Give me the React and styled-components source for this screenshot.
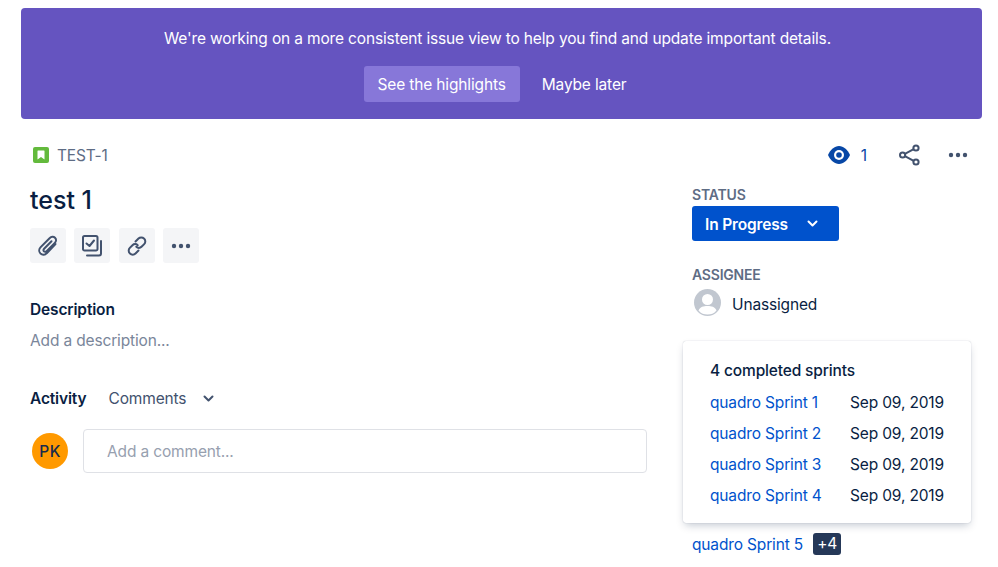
import React from "react";
import styled, { createGlobalStyle } from "styled-components";

const Global = createGlobalStyle`
  html, body { margin: 0; padding: 0; background: #fff; }
  body {
    width: 998px;
    height: 567px;
    overflow: hidden;
    font-family: Inter, "Liberation Sans", sans-serif;
    font-size: 15.5px;
    letter-spacing: -0.15px;
    color: #091e42;
  }
`;

const Page = styled.div`
  padding: 8px 16px 0 21px;
`;

const Banner = styled.div`
  height: 111px;
  box-sizing: border-box;
  padding-top: 20px;
  background: #6554c0;
  border-radius: 4px;
  color: #fff;
  text-align: center;
`;

const BannerText = styled.div`
  line-height: 21px;
  padding-right: 8px;
`;

const BannerActions = styled.div`
  display: flex;
  justify-content: center;
  gap: 4px;
  margin-top: 17px;
  padding-left: 5px;
`;

const BannerButton = styled.div`
  height: 36px;
  line-height: 37px;
  padding: 0 ${(p) => (p.$primary ? 14 : 18)}px;
  border-radius: 3px;
  background: ${(p) => (p.$primary ? "#8777d9" : "transparent")};
`;

const Columns = styled.div`
  display: grid;
  grid-template-columns: 662px 1fr;
  padding-left: 9px;
`;

const Main = styled.div`
  padding-top: 25px;
`;

const IssueKey = styled.div`
  display: flex;
  align-items: center;
  gap: 8px;
  height: 22px;
  padding-left: 3px;
  color: #5e6c84;
`;

const Title = styled.h1`
  margin: 19px 0 0;
  font-size: 25px;
  line-height: 30px;
  font-weight: 500;
  letter-spacing: 0;
  color: #091e42;
`;

const ToolRow = styled.div`
  display: flex;
  gap: 8.3px;
  margin-top: 13px;
`;

const ToolButton = styled.div`
  width: 36px;
  height: 35px;
  display: flex;
  align-items: center;
  justify-content: center;
  background: #f4f5f7;
  border-radius: 3px;
  color: #42526e;
`;

const SectionTitle = styled.div`
  font-weight: 600;
  line-height: 20px;
  color: #091e42;
`;

const Description = styled.section`
  margin-top: 37px;
`;

const Placeholder = styled.div`
  margin-top: 11px;
  line-height: 20px;
  color: #7a869a;
`;

const ActivityRow = styled.div`
  display: flex;
  align-items: center;
  margin-top: 38px;
  height: 20px;
`;

const ActivityFilter = styled.div`
  display: flex;
  align-items: center;
  gap: 17px;
  margin-left: 22px;
  padding-bottom: 2px;
  color: #42526e;
`;

const CommentRow = styled.div`
  display: flex;
  align-items: center;
  gap: 15px;
  margin-top: 20px;
  padding-left: 2px;
`;

const Avatar = styled.div`
  width: 36px;
  height: 36px;
  flex: none;
  display: flex;
  align-items: center;
  justify-content: center;
  border-radius: 50%;
  background: #ff9900;
  font-weight: 500;
  letter-spacing: 0.5px;
  color: #172b4d;
`;

const CommentBox = styled.div`
  width: 564px;
  height: 44px;
  box-sizing: border-box;
  padding-left: 23px;
  line-height: 43px;
  border: 1px solid #dfe1e6;
  border-radius: 4px;
  color: #97a0af;
`;

const Side = styled.div`
  position: relative;
  padding-top: 24px;
`;

const SideActions = styled.div`
  display: flex;
  align-items: center;
  justify-content: flex-end;
  width: 276px;
  height: 24px;
  color: #42526e;
`;

const WatchCount = styled.span`
  margin: 0 32px 0 11px;
  color: #0747a6;
`;

const ShareWrap = styled.span`
  display: flex;
  margin-right: 28px;
`;

const FieldLabel = styled.div`
  font-size: 14px;
  line-height: 16px;
  font-weight: 600;
  letter-spacing: -0.2px;
  color: #5e6c84;
  margin-top: ${(p) => p.$top}px;
`;

const StatusButton = styled.div`
  display: flex;
  align-items: center;
  justify-content: space-between;
  box-sizing: border-box;
  width: 147px;
  height: 35px;
  margin-top: 3px;
  padding: 0 21px 0 13px;
  background: #0052cc;
  border-radius: 3px;
  color: #fff;
  font-weight: 600;
`;

const StatusLabel = styled.span`
  padding-top: 2px;
`;

const Assignee = styled.div`
  display: flex;
  align-items: center;
  gap: 11px;
  margin-top: 5px;
  padding-left: 2px;
  height: 28px;
`;

const AssigneeName = styled.span`
  padding-top: 4px;
`;

const SprintField = styled.div`
  display: flex;
  align-items: center;
  gap: 10px;
  margin-top: 217px;
`;

const SprintLink = styled.a`
  color: #0052cc;
  text-decoration: none;
`;

const MoreBadge = styled.span`
  width: 28px;
  height: 22px;
  line-height: 22px;
  text-align: center;
  border-radius: 3px;
  background: #253858;
  color: #fff;
`;

const Popup = styled.div`
  position: absolute;
  left: -9px;
  top: 222px;
  box-sizing: border-box;
  width: 288px;
  height: 182px;
  padding: 20px 27px 0;
  background: #fff;
  border-radius: 3px;
  box-shadow: 0 4px 8px -2px rgba(9, 30, 66, 0.25), 0 0 1px rgba(9, 30, 66, 0.31);
`;

const PopupTitle = styled.div`
  line-height: 20px;
  font-weight: 500;
  margin-bottom: 6px;
`;

const PopupRow = styled.div`
  display: flex;
  justify-content: space-between;
  align-items: center;
  height: 31px;
`;

const Eye = () => (
  <svg width="22" height="18" viewBox="0 0 22 18">
    <path d="M0 9C2.500 3.500 6.500 0 11 0S19.500 3.500 22 9C19.500 14.500 15.500 18 11 18S2.500 14.500 0 9Z" fill="#0747a6" />
    <circle cx="11" cy="9" r="5" fill="#fff" />
    <circle cx="11" cy="9" r="2.800" fill="#0747a6" />
  </svg>
);

const Share = () => (
  <svg width="21" height="22" viewBox="0 0 21 22" fill="none" stroke="#42526e" strokeWidth="2">
    <circle cx="17" cy="4" r="2.600" />
    <circle cx="3.600" cy="11" r="2.600" />
    <circle cx="17" cy="18" r="2.600" />
    <path d="M5.900 9.800L14.700 5.200M5.900 12.200L14.700 16.800" />
  </svg>
);

const Dots = () => (
  <svg width="20" height="6" viewBox="0 0 20 6" fill="#42526e">
    <circle cx="3" cy="3" r="2.200" />
    <circle cx="10" cy="3" r="2.200" />
    <circle cx="17" cy="3" r="2.200" />
  </svg>
);

const Chevron = ({ color }) => (
  <svg width="11" height="7" viewBox="0 0 11 7" fill="none" stroke={color} strokeWidth="2" strokeLinecap="round" strokeLinejoin="round">
    <path d="M1.500 1.500L5.500 5.500L9.500 1.500" />
  </svg>
);

const Story = () => (
  <svg width="16" height="16" viewBox="0 0 16 16">
    <rect width="16" height="16" rx="2" fill="#63ba3c" />
    <path d="M5 3.500h6a.5.5 0 0 1 .5.5v8.500L8 10l-3.500 2.500V4a.5.5 0 0 1 .5-.5Z" fill="#fff" />
  </svg>
);

const Clip = () => (
  <svg width="22" height="22" viewBox="0 0 22 22" fill="none" stroke="#42526e" strokeWidth="2" strokeLinecap="round">
    <path d="M18.500 9L10 18C8.200 19.900 5.400 20.300 3.500 18.600C1.600 16.800 1.900 14 3.700 12.100L12.800 3C14.200 1.500 16.500 1.200 18 2.700C19.500 4.200 19.300 6.400 17.800 7.900L9.600 16.200C8.800 17 7.600 17.100 6.900 16.400C6.200 15.700 6.300 14.600 7.100 13.800L14.500 6.300" />
  </svg>
);

const Subtasks = () => (
  <svg width="22" height="22" viewBox="0 0 22 22" fill="none" stroke="#42526e" strokeWidth="2" strokeLinecap="round" strokeLinejoin="round">
    <path d="M3.500 1h11.500a1.500 1.500 0 0 1 1.500 1.500v11.500a1.500 1.500 0 0 1-1.500 1.500h-11.500a1.500 1.500 0 0 1-1.500-1.500v-11.500a1.500 1.500 0 0 1 1.500-1.500Z" />
    <path d="M5.500 8.500L8.500 11L13 5.500" />
    <path d="M20 6v12.500a2 2 0 0 1-2 2H6" />
  </svg>
);

const LinkIcon = () => (
  <svg width="22" height="22" viewBox="0 0 22 22" fill="none" stroke="#42526e" strokeWidth="2" strokeLinecap="round">
    <path d="M9.500 6.500L12.500 3.500C14 2 16.500 2 18 3.500C19.700 5 19.700 7.600 18.200 9.100L15.500 11.800C14 13.300 11.700 13.200 10.300 11.800" />
    <path d="M12.500 15.500L9.500 18.500C8 20 5.500 20 4 18.500C2.300 17 2.300 14.400 3.800 12.900L6.500 10.200C8 8.700 10.300 8.800 11.700 10.200" />
  </svg>
);

const UserAvatar = () => (
  <svg width="27" height="27" viewBox="0 0 27 27">
    <circle cx="13.500" cy="13.500" r="13.500" fill="#c1c7d0" />
    <circle cx="13.500" cy="10.500" r="5.500" fill="#fff" />
    <path d="M4.500 21.500C6 17.800 9.500 17 13.500 17S21 17.800 22.500 21.500C20 24.500 17 25.500 13.500 25.500S7 24.500 4.500 21.500Z" fill="#fff" />
  </svg>
);

const sprints = ["quadro Sprint 1", "quadro Sprint 2", "quadro Sprint 3", "quadro Sprint 4"];

export default function App() {
  return (
    <Page>
      <Global />
      <Banner>
        <BannerText>We're working on a more consistent issue view to help you find and update important details.</BannerText>
        <BannerActions>
          <BannerButton $primary>See the highlights</BannerButton>
          <BannerButton>Maybe later</BannerButton>
        </BannerActions>
      </Banner>
      <Columns>
        <Main>
          <IssueKey>
            <Story />
            TEST-1
          </IssueKey>
          <Title>test 1</Title>
          <ToolRow>
            <ToolButton><Clip /></ToolButton>
            <ToolButton><Subtasks /></ToolButton>
            <ToolButton><LinkIcon /></ToolButton>
            <ToolButton><Dots /></ToolButton>
          </ToolRow>
          <Description>
            <SectionTitle>Description</SectionTitle>
            <Placeholder>Add a description...</Placeholder>
          </Description>
          <ActivityRow>
            <SectionTitle>Activity</SectionTitle>
            <ActivityFilter>
              Comments
              <Chevron color="#42526e" />
            </ActivityFilter>
          </ActivityRow>
          <CommentRow>
            <Avatar>PK</Avatar>
            <CommentBox>Add a comment...</CommentBox>
          </CommentRow>
        </Main>
        <Side>
          <SideActions>
            <Eye />
            <WatchCount>1</WatchCount>
            <ShareWrap><Share /></ShareWrap>
            <Dots />
          </SideActions>
          <FieldLabel $top={20}>STATUS</FieldLabel>
          <StatusButton>
            <StatusLabel>In Progress</StatusLabel>
            <Chevron color="#fff" />
          </StatusButton>
          <FieldLabel $top={26}>ASSIGNEE</FieldLabel>
          <Assignee>
            <UserAvatar />
            <AssigneeName>Unassigned</AssigneeName>
          </Assignee>
          <SprintField>
            <SprintLink href="#">quadro Sprint 5</SprintLink>
            <MoreBadge>+4</MoreBadge>
          </SprintField>
          <Popup>
            <PopupTitle>4 completed sprints</PopupTitle>
            {sprints.map((name) => (
              <PopupRow key={name}>
                <SprintLink href="#">{name}</SprintLink>
                Sep 09, 2019
              </PopupRow>
            ))}
          </Popup>
        </Side>
      </Columns>
    </Page>
  );
}
